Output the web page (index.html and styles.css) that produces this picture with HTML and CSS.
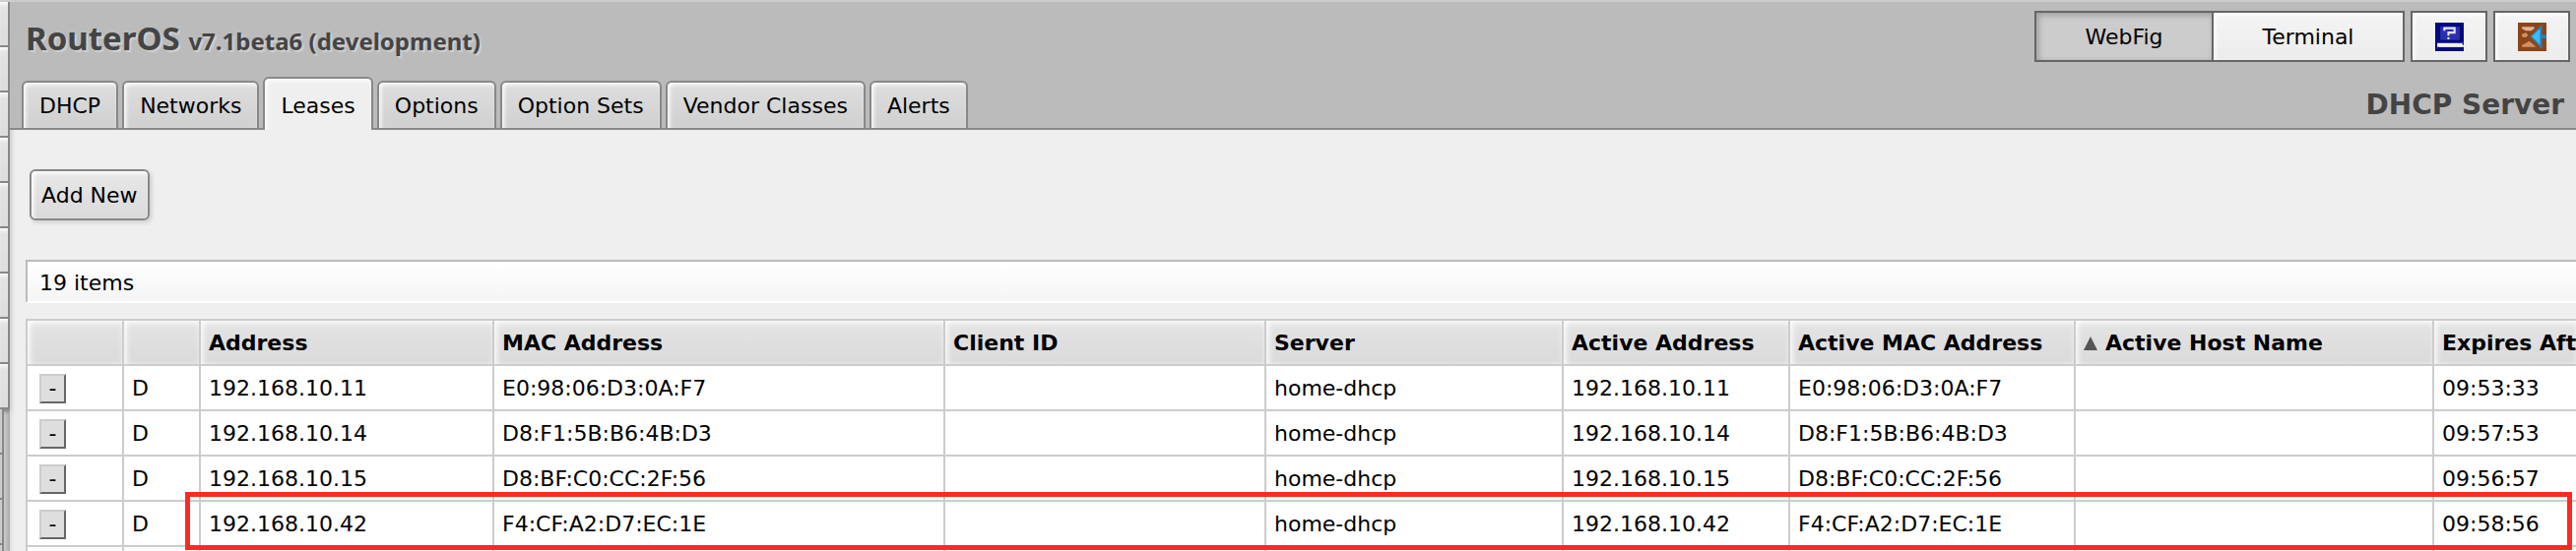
FILE: index.html
```html
<!DOCTYPE html>
<html lang="en">
<head>
  <meta charset="utf-8">
  <title>RouterOS - DHCP Server</title>
  <link rel="stylesheet" href="styles.css">
</head>
<body>
  <aside class="sidebar">
    <ul class="menu">
      <li></li><li></li><li></li><li></li><li></li><li></li><li></li><li></li><li></li>
    </ul>
    <ul class="submenu">
      <li></li><li></li><li></li><li></li>
    </ul>
  </aside>

  <main class="main">
    <header class="header">
      <div class="topbar">
        <h1 class="logo">RouterOS <small>v7.1beta6 (development)</small></h1>
        <div class="toolbar">
          <div class="switch">
            <button type="button" class="tool active">WebFig</button>
            <button type="button" class="tool">Terminal</button>
          </div>
          <button type="button" class="tool icon" aria-label="Manual">
            <svg viewBox="0 0 14 14" width="29" height="29">
              <path fill="#000a80" d="M0 0h14v10H1v3h13v1H0z"/>
              <path fill="#2b2fae" d="M2.500 2h9.500v6.500H2.500z"/>
              <path fill="#000a80" d="M13 10h1v1h-1zM1 12h13v2H1z"/>
              <path fill="#f0f0f0" d="M2 10.300h11.500v1.600H2z"/>
              <path fill="none" stroke="#e4e6f8" stroke-width="1" d="M4.500 4V2.700h5v2.200h-3v1.500M6.500 7.200v1"/>
            </svg>
          </button>
          <button type="button" class="tool icon" aria-label="Logout">
            <svg viewBox="0 0 14 14" width="29" height="29">
              <path fill="#8b451b" d="M0 0h14v14H0z"/>
              <path fill="#e0b496" d="M2 2h6v1L6.500 4H4L2 3z"/>
              <path fill="#d39064" d="M2 5.500l2-.5 1 1-1 1.300-2-.3zM2 12v-1l2-1 1.500-1 3 2.500V12z"/>
              <path fill="#2f7fb4" d="M6 6.800L11.800 1v5H14v1.700h-2.200V13z"/>
              <path fill="#38bdf4" d="M6.800 6.800L10.800 3v7.800z"/>
            </svg>
          </button>
        </div>
      </div>
      <div class="tabbar">
        <nav class="tabs">
          <a class="tab" href="#dhcp">DHCP</a>
          <a class="tab" href="#networks">Networks</a>
          <a class="tab active" href="#leases">Leases</a>
          <a class="tab" href="#options">Options</a>
          <a class="tab" href="#option-sets">Option Sets</a>
          <a class="tab" href="#vendor-classes">Vendor Classes</a>
          <a class="tab" href="#alerts">Alerts</a>
        </nav>
        <h2 class="title">DHCP Server</h2>
      </div>
    </header>

    <section class="content">
      <button type="button" class="add-new">Add New</button>
      <div class="summary">19 items</div>
      <div class="table-wrap">
        <table class="leases">
          <colgroup>
            <col class="col-remove">
            <col class="col-flags">
            <col class="col-address">
            <col class="col-mac">
            <col class="col-client">
            <col class="col-server">
            <col class="col-active-address">
            <col class="col-active-mac">
            <col class="col-host">
            <col>
          </colgroup>
          <thead>
            <tr>
              <th></th>
              <th></th>
              <th>Address</th>
              <th>MAC Address</th>
              <th>Client ID</th>
              <th>Server</th>
              <th>Active Address</th>
              <th>Active MAC Address</th>
              <th><span class="sort"></span>Active Host Name</th>
              <th>Expires After</th>
            </tr>
          </thead>
          <tbody>
            <tr>
              <td><button type="button" class="remove">-</button></td>
              <td>D</td>
              <td>192.168.10.11</td>
              <td>E0:98:06:D3:0A:F7</td>
              <td></td>
              <td>home-dhcp</td>
              <td>192.168.10.11</td>
              <td>E0:98:06:D3:0A:F7</td>
              <td></td>
              <td>09:53:33</td>
            </tr>
            <tr>
              <td><button type="button" class="remove">-</button></td>
              <td>D</td>
              <td>192.168.10.14</td>
              <td>D8:F1:5B:B6:4B:D3</td>
              <td></td>
              <td>home-dhcp</td>
              <td>192.168.10.14</td>
              <td>D8:F1:5B:B6:4B:D3</td>
              <td></td>
              <td>09:57:53</td>
            </tr>
            <tr>
              <td><button type="button" class="remove">-</button></td>
              <td>D</td>
              <td>192.168.10.15</td>
              <td>D8:BF:C0:CC:2F:56</td>
              <td></td>
              <td>home-dhcp</td>
              <td>192.168.10.15</td>
              <td>D8:BF:C0:CC:2F:56</td>
              <td></td>
              <td>09:56:57</td>
            </tr>
            <tr class="marked">
              <td><button type="button" class="remove">-</button></td>
              <td>D</td>
              <td>192.168.10.42</td>
              <td>F4:CF:A2:D7:EC:1E</td>
              <td></td>
              <td>home-dhcp</td>
              <td>192.168.10.42</td>
              <td>F4:CF:A2:D7:EC:1E</td>
              <td></td>
              <td>09:58:56</td>
            </tr>
            <tr>
              <td></td>
              <td></td>
              <td></td>
              <td></td>
              <td></td>
              <td></td>
              <td></td>
              <td></td>
              <td></td>
              <td></td>
            </tr>
          </tbody>
        </table>
      </div>
    </section>
  </main>
</body>
</html>
```
FILE: styles.css
```css
:root {
  --bg: #efefef;
  --header: #bbb;
  --line: #888;
  --grid: #ccc;
  --text: #000;
  --heading: #444;
  --mark: #ff2a1f;
}

* {
  box-sizing: border-box;
}

body {
  display: flex;
  height: 100vh;
  margin: 0;
  overflow: hidden;
  border-top: 2px solid #ccc;
  background: var(--bg);
  color: var(--text);
  font: 22px/28px "DejaVu Sans", Verdana, sans-serif;
}

button {
  font: inherit;
  color: inherit;
}

/* sidebar */

.sidebar {
  flex: none;
  width: 10px;
  background: linear-gradient(to right, #ccc 4px, #aaa);
}

.sidebar ul {
  margin: 0;
  padding: 0;
  list-style: none;
}

.sidebar li {
  height: 46px;
  border-bottom: 2px solid var(--line);
  background: linear-gradient(#e4e4e4, #dcdcdc);
  box-shadow: inset 0 4px 4px -2px #fff;
}

.menu {
  border-right: 2px solid var(--line);
  box-shadow: 0 2px 4px #777;
}

.submenu {
  width: 4px;
  border-right: 2px solid var(--line);
}

.submenu li {
  background: #ccc;
  box-shadow: none;
}

/* header */

.main {
  flex: 1;
  min-width: 0;
}

.header {
  border-bottom: 2px solid var(--line);
  background: var(--header);
}

.topbar {
  display: flex;
  justify-content: space-between;
  height: 76px;
  padding: 9px 6px 0 16px;
}

.logo {
  margin: 0;
  color: var(--heading);
  font: bold 33px/56px "Noto Sans", Verdana, sans-serif;
  text-shadow: 2px 2px 1px #d0d0d0;
}

.logo small {
  font-size: 24px;
}

.toolbar {
  display: flex;
  gap: 6px;
}

.switch {
  display: flex;
}

.tool {
  width: 196px;
  height: 52px;
  padding: 2px 0 0;
  border: 2px solid #666;
  background: linear-gradient(#f4f4f4, #ececec);
  box-shadow: inset 2px 2px 4px #fff;
}

.tool.active {
  width: 180px;
  border-right: 0;
  background: #ccc;
  box-shadow: inset 2px 2px 6px #999;
}

.tool.icon {
  width: 78px;
  padding: 0;
}

.tool svg {
  display: block;
  margin: 0 auto;
}

.tabbar {
  display: flex;
  align-items: flex-end;
  justify-content: space-between;
  padding: 0 12px;
}

.tabs {
  display: flex;
  align-items: flex-end;
  gap: 4px;
}

.tab {
  height: 48px;
  padding: 10px 16px 0;
  border: 2px solid var(--line);
  border-bottom: 0;
  border-radius: 6px 6px 0 0;
  background: linear-gradient(#dedede, #d0d0d0);
  box-shadow: inset 2px 2px 4px #fff;
  color: inherit;
  text-decoration: none;
  white-space: nowrap;
}

.tab.active {
  height: 54px;
  margin-bottom: -2px;
  padding-top: 14px;
  background: var(--bg);
}

.title {
  margin: 0;
  color: var(--heading);
  font-size: 28px;
  line-height: 46px;
}

/* content */

.content {
  padding: 40px 0 0 16px;
  box-shadow: inset 4px 0 4px -2px #ddd;
}

.add-new {
  display: block;
  height: 52px;
  margin: 0 4px 40px;
  padding: 2px 10px 0;
  border: 2px solid var(--line);
  border-radius: 6px;
  background: linear-gradient(#e8e8e8, #dadada);
  box-shadow: inset 2px 2px 4px #fff, 2px 2px 4px #ccc;
}

.summary {
  height: 44px;
  margin-bottom: 16px;
  padding: 8px 12px;
  border: 2px solid var(--header);
  border-right: 0;
  border-bottom-color: #fff;
  background: linear-gradient(#fff, #f5f5f5);
}

.table-wrap {
  overflow: hidden;
}

.leases {
  width: 100%;
  table-layout: fixed;
  border-collapse: separate;
  border-spacing: 0;
  border-top: 2px solid var(--grid);
  background: #fff;
}

.leases th,
.leases td {
  height: 46px;
  padding: 2px 8px 0;
  border-bottom: 2px solid var(--grid);
  border-left: 2px solid var(--grid);
  text-align: left;
  white-space: nowrap;
}

.leases th {
  background: linear-gradient(#e4e4e4, #dadada);
  box-shadow: inset 2px 2px 6px #fff;
}

.leases td:first-child {
  padding-left: 12px;
}

.col-remove { width: 98px; }
.col-flags { width: 78px; }
.col-address { width: 298px; }
.col-mac { width: 458px; }
.col-client { width: 326px; }
.col-server { width: 302px; }
.col-active-address { width: 230px; }
.col-active-mac { width: 290px; }
.col-host { width: 364px; }

.sort {
  display: inline-block;
  margin-right: 8px;
  border: solid transparent;
  border-width: 0 7px 14px;
  border-bottom-color: #555;
}

.remove {
  display: block;
  width: 27px;
  height: 30px;
  padding: 0;
  border: 2px solid;
  border-color: #ccc #666 #666 #ccc;
  background: #dedede;
  line-height: 24px;
}

.marked {
  position: relative;
}

/* frame drawn over the marked row */
.marked td:first-child::after {
  content: "";
  position: absolute;
  top: -10px;
  right: 4px;
  bottom: -3px;
  left: 162px;
  border: 5px solid var(--mark);
}
```
